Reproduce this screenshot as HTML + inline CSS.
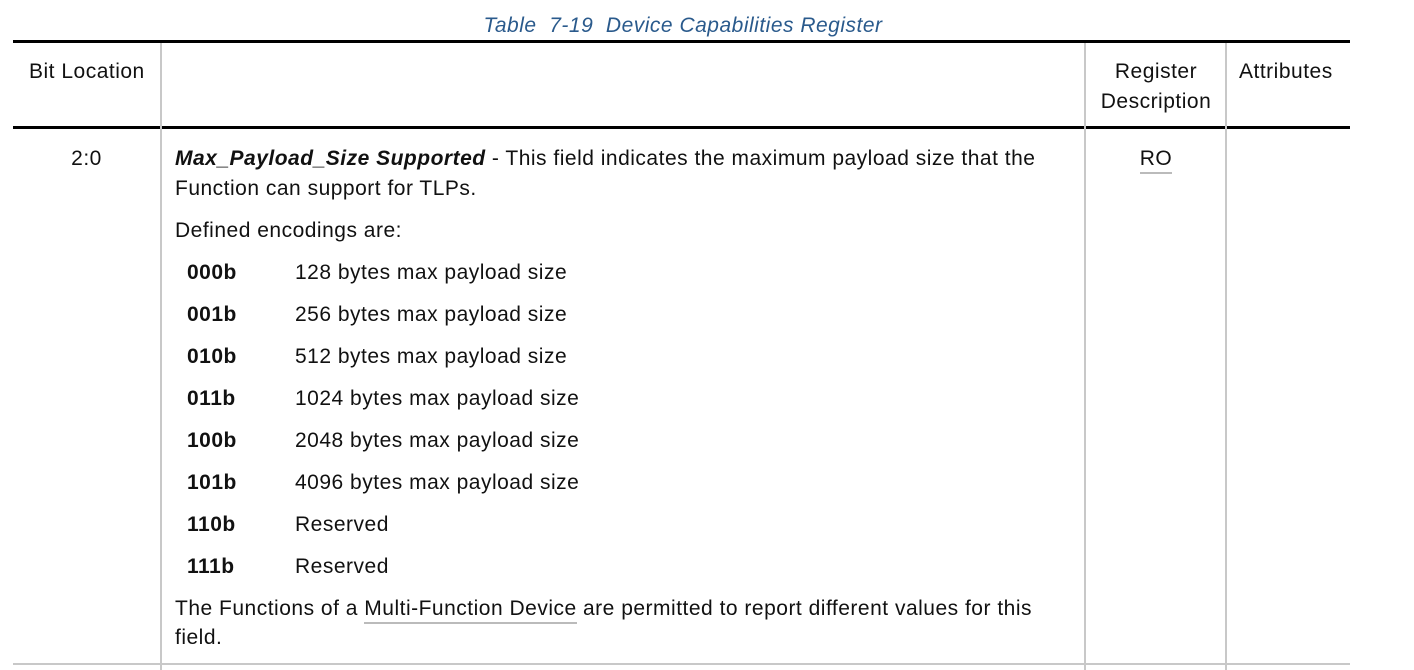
<!DOCTYPE html>
<html><head><meta charset="utf-8"><style>
body{margin:0;width:1414px;height:670px;background:#fff;position:relative;overflow:hidden;font-family:"Liberation Sans",sans-serif;color:#111;}
.t{position:absolute;font-size:21px;line-height:24px;white-space:nowrap;letter-spacing:0.5px;margin-top:1px;}
.b{font-weight:bold;}
.hl{position:absolute;background:#000;height:3px;}
.vl{position:absolute;background:#c8c8c8;width:2px;}
.c{text-align:center;}
</style></head><body>
<div class="t" style="left:0;width:1366px;top:13px;text-align:center;color:#2a5a8c;font-style:italic;letter-spacing:0.5px;">Table&nbsp; 7-19&nbsp; Device Capabilities Register</div>
<div class="hl" style="left:13px;width:1337px;top:40px;"></div>
<div class="hl" style="left:13px;width:1337px;top:126px;"></div>
<div style="position:absolute;left:13px;width:1337px;top:663px;height:2px;background:#c8c8c8;"></div>
<div class="vl" style="left:160px;top:43px;height:627px;"></div>
<div class="vl" style="left:1084px;top:43px;height:627px;"></div>
<div class="vl" style="left:1225px;top:43px;height:627px;"></div>

<div class="t" style="left:29px;top:59px;">Bit Location</div>
<div class="t c" style="left:1086px;width:140px;top:59px;">Register</div>
<div class="t c" style="left:1086px;width:140px;top:89px;">Description</div>
<div class="t" style="left:1239px;top:59px;">Attributes</div>

<div class="t c" style="left:13px;width:147px;top:146px;">2:0</div>
<div class="t" style="left:175px;top:146px;"><b><i>Max_Payload_Size Supported</i></b> - This field indicates the maximum payload size that the</div>
<div class="t" style="left:175px;top:176px;">Function can support for TLPs.</div>
<div class="t" style="left:175px;top:218px;">Defined encodings are:</div>
<div class="t c" style="left:1086px;width:140px;top:146px;"><span style="border-bottom:2px solid #bbb;padding-bottom:2px;">RO</span></div>

<div class="t b" style="left:187px;top:260px;">000b</div><div class="t" style="left:295px;top:260px;">128 bytes max payload size</div>
<div class="t b" style="left:187px;top:302px;">001b</div><div class="t" style="left:295px;top:302px;">256 bytes max payload size</div>
<div class="t b" style="left:187px;top:344px;">010b</div><div class="t" style="left:295px;top:344px;">512 bytes max payload size</div>
<div class="t b" style="left:187px;top:386px;">011b</div><div class="t" style="left:295px;top:386px;">1024 bytes max payload size</div>
<div class="t b" style="left:187px;top:428px;">100b</div><div class="t" style="left:295px;top:428px;">2048 bytes max payload size</div>
<div class="t b" style="left:187px;top:470px;">101b</div><div class="t" style="left:295px;top:470px;">4096 bytes max payload size</div>
<div class="t b" style="left:187px;top:512px;">110b</div><div class="t" style="left:295px;top:512px;">Reserved</div>
<div class="t b" style="left:187px;top:554px;">111b</div><div class="t" style="left:295px;top:554px;">Reserved</div>

<div class="t" style="left:175px;top:596px;">The Functions of a <span style="border-bottom:2px solid #bbb;padding-bottom:2px;">Multi-Function Device</span> are permitted to report different values for this</div>
<div class="t" style="left:175px;top:625px;">field.</div>
</body></html>
